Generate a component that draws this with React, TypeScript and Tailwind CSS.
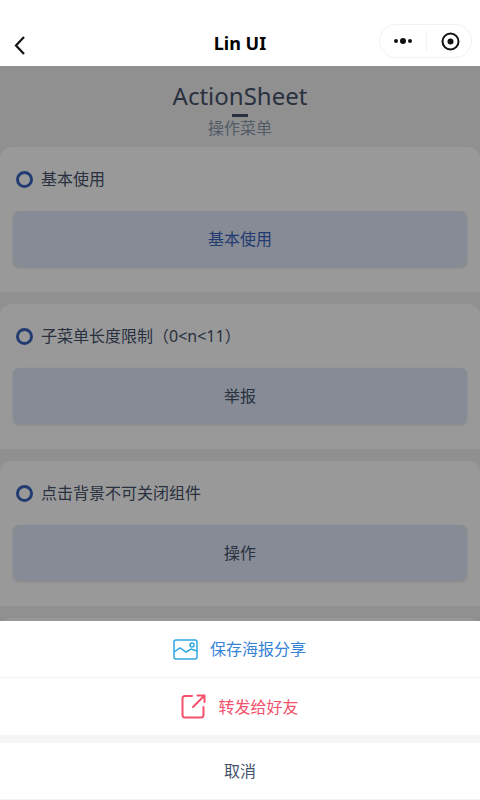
const font = { fontFamily: '"Noto Sans", "Noto Sans CJK SC", sans-serif' };

const sections = [
  { title: '基本使用', action: '基本使用', blue: true },
  { title: '子菜单长度限制（0<n<11）', action: '举报' },
  { title: '点击背景不可关闭组件', action: '操作' },
];

function Section({ title, action, blue }: { title: string; action: string; blue?: boolean }) {
  return (
    <div className="h-[145px] shrink-0 rounded-t-xl bg-white px-[13px]">
      <div className="flex h-[64px] items-center gap-2 pl-[3px]">
        <span className="h-[17px] w-[17px] rounded-full border-[3px] border-[#3963bc]" />
        <span className="text-base text-[#45526b]">{title}</span>
      </div>
      <div
        className={`flex h-[56px] items-center justify-center rounded-md bg-[#dfe8f8] text-base shadow-sm ${
          blue ? 'text-[#3963bc]' : 'text-[#45526b]'
        }`}
      >
        {action}
      </div>
    </div>
  );
}

export default function App() {
  return (
    <div className="relative flex h-[800px] w-[480px] flex-col overflow-hidden bg-[#f0f0f0]" style={font}>
      <div className="relative z-20 flex h-[66px] shrink-0 items-end bg-white pb-[8px]">
        <div className="flex w-[40px] justify-center pb-[1px]">
          <svg width="24" height="24" viewBox="0 0 24 24" fill="none" stroke="#111" strokeWidth="2.2">
            <path d="M16 4 L8 12.5 L16 21" />
          </svg>
        </div>
        <div className="flex-1 pb-[3px] pr-[0px] text-center text-lg leading-[24px] font-bold text-black" style={{ marginLeft: -40 }}>
          Lin UI
        </div>
        <div className="absolute right-[8px] top-[24px] flex h-[34px] w-[93px] items-center rounded-full border border-[#f2f2f2] bg-white">
          <svg className="ml-[13px]" width="20" height="8" viewBox="0 0 20 8" fill="#111">
            <circle cx="3" cy="4" r="2" />
            <circle cx="10" cy="4" r="3" />
            <circle cx="17" cy="4" r="2" />
          </svg>
          <span className="ml-[13px] h-[20px] w-px bg-[#f2f2f2]" />
          <svg className="ml-[14px]" width="19" height="19" viewBox="0 0 19 19" fill="none">
            <circle cx="9.5" cy="9.5" r="8" stroke="#111" strokeWidth="2" />
            <circle cx="9.5" cy="9.5" r="3" fill="#111" />
          </svg>
        </div>
      </div>

      <div className="flex flex-col items-center pt-[12px]">
        <div className="text-2xl leading-[36px] text-[#45526b]">ActionSheet</div>
        <div className="h-[3px] w-[16px] bg-[#45526b]" />
        <div className="text-base leading-[22px] text-[#8c98ae]">操作菜单</div>
      </div>

      <div className="mt-[8px] flex flex-col gap-3">
        {sections.map((s) => (
          <Section key={s.title} title={s.title} action={s.action} blue={s.blue} />
        ))}
        <div className="h-[145px] shrink-0 rounded-t-xl bg-white" />
      </div>

      <div className="absolute inset-x-0 bottom-0 top-[66px] z-10 bg-black/40" />

      <div className="absolute inset-x-0 bottom-0 z-10 flex flex-col bg-white text-base">
        <div className="flex h-[57px] items-center justify-center gap-[12px] border-b border-[#f3f3f3] pr-[1px] text-[#3683d6]">
          <svg width="25" height="21" viewBox="0 0 25 21" fill="none" stroke="#2ea7e0" strokeWidth="1.5">
            <rect x="1" y="1" width="23" height="19" rx="2" />
            <circle cx="19" cy="6" r="2" />
            <path d="M1 13 L7 9 L13 13 L18 10 L24 12" />
          </svg>
          <span>保存海报分享</span>
        </div>
        <div className="flex h-[57px] items-center justify-center gap-[12px] text-[#f4516c]">
          <svg width="25" height="25" viewBox="0 0 25 25" fill="none" stroke="#f4516c" strokeWidth="2" strokeLinecap="round">
            <path d="M11 2 H4 Q1.5 2 1.5 4.5 V21 Q1.5 23.5 4 23.5 H20 Q22.5 23.5 22.5 21 V13" />
            <path d="M12 13 L23.5 1.5 M16.5 1.5 H23.5 V8" />
          </svg>
          <span>转发给好友</span>
        </div>
        <div className="h-[8px] bg-[#f5f5f5]" />
        <div className="flex h-[57px] items-center justify-center border-b border-[#f3f3f3] text-[#45526b]">取消</div>
      </div>
    </div>
  );
}
